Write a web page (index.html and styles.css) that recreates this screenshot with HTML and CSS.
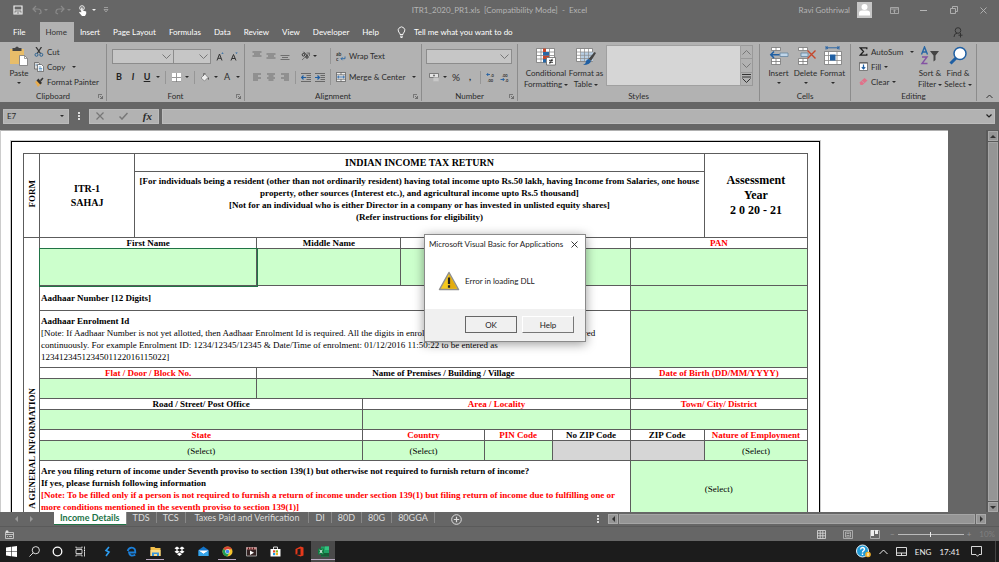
FILE: index.html
```html
<!DOCTYPE html>
<html lang="en">
<head>
    <meta charset="utf-8">
    <title>ITR1_2020_PR1.xls [Compatibility Mode] - Excel</title>
    <meta name="viewport" content="width=device-width, initial-scale=1.0">
    <link rel="stylesheet" href="styles.css">
</head>
<body>

<!-- Title bar -->
<header class="titlebar">
    <div class="quick">
        <button aria-label="Save"><svg width="10" height="10" viewBox="0 0 10 10"><path d="M1 1h8v8H1z" fill="none" stroke="#f0f0f0" stroke-width="1.2"/><path d="M1 5h8M3 9V7h4v2" fill="none" stroke="#f0f0f0" stroke-width="1.2"/></svg></button>
        <button class="dim" aria-label="Undo"><svg width="10" height="10" viewBox="0 0 10 10"><path d="M4 1L1 4l3 3M1 4h5q3 0 3 3v1l-2 1" fill="none" stroke="currentColor" stroke-width="1.2"/></svg><i class="caret"></i></button>
        <button class="dim" aria-label="Redo"><svg width="10" height="10" viewBox="0 0 10 10"><path d="M6 1l3 3-3 3M9 4H4Q1 4 1 7v1l2 1" fill="none" stroke="currentColor" stroke-width="1.2"/></svg><i class="caret"></i></button>
        <button aria-label="Touch mode"><svg width="10" height="11" viewBox="0 0 10 11"><circle cx="4" cy="3" r="2.3" fill="none" stroke="#eee"/><path d="M3.2 2.5h1.4v3l3.6 1v2.2L7 11H4L1 7.5l1-.7 1.2.8z" fill="#fff"/></svg><i class="caret"></i></button>
        <button aria-label="Customize toolbar"><svg width="6" height="6" viewBox="0 0 6 6"><path d="M1 .5h4M1 2.500h4L3 5z" fill="none" stroke="#aaa" stroke-width=".8"/></svg></button>
    </div>
    <div class="doc-title">ITR1_2020_PR1.xls&nbsp; [Compatibility Mode]&nbsp; -&nbsp; Excel</div>
    <div class="win-controls">
        <span>Ravi Gothriwal</span>
        <svg class="avatar" width="15" height="16" viewBox="0 0 15 16"><path d="M0 0h15v16H0z" fill="#c6c6c6"/><circle cx="7.500" cy="5" r="3" fill="#fff"/><path d="M2 13.500V11q0-2.500 3-2.500h5q3 0 3 2.500v2.500z" fill="#fff"/></svg>
        <button aria-label="Ribbon options"><svg width="9" height="7" viewBox="0 0 9 7"><path d="M.5.5h8v6h-8zM.5 2h8M4.500 6V3.200M3.200 4.300l1.300-1.300 1.300 1.300" fill="none" stroke="currentColor" stroke-width=".8"/></svg></button>
        <button aria-label="Minimize"><svg width="7" height="7" viewBox="0 0 7 7"><path d="M0 3.500h7" stroke="currentColor"/></svg></button>
        <button aria-label="Restore"><svg width="8" height="8" viewBox="0 0 8 8"><path d="M.5 2.500h5v5h-5zM2.500 2V.5h5v5H6" fill="none" stroke="currentColor" stroke-width=".9"/></svg></button>
        <button aria-label="Close"><svg width="7" height="7" viewBox="0 0 7 7"><path d="M.5.5l6 6M6.500.5l-6 6" stroke="currentColor" stroke-width=".9"/></svg></button>
    </div>
</header>

<!-- Ribbon tabs -->
<nav class="tabs">
    <a class="file" href="#">File</a>
    <a class="active" href="#">Home</a>
    <a href="#">Insert</a>
    <a href="#">Page Layout</a>
    <a href="#">Formulas</a>
    <a href="#">Data</a>
    <a href="#">Review</a>
    <a href="#">View</a>
    <a href="#">Developer</a>
    <a href="#">Help</a>
    <button class="tell-me"><svg width="9" height="12" viewBox="0 0 9 12"><path d="M3 8.500Q3 7 1.700 6A3.300 3.300 0 1 1 7.300 6Q6 7 6 8.500zM3 10.200h3M3.500 11.500h2" fill="none" stroke="#fff" stroke-width=".9"/></svg>Tell me what you want to do</button>
    <button class="share" aria-label="Share"><svg width="10" height="11" viewBox="0 0 10 11"><circle cx="5" cy="3.500" r="2.800" fill="none" stroke="#333"/><path d="M1 10q0-3.500 3-3.800M7.500 6v4.500M5.500 8.200h4" fill="none" stroke="#333"/></svg></button>
</nav>

<!-- Ribbon -->
<section class="ribbon">
    <div class="group clipboard">
        <div class="group-body">
            <button class="big"><svg width="20" height="20" viewBox="0 0 20 20"><path d="M1 3h14v15H1z" fill="#e8bd69"/><path d="M3.500 2H6q2-3 4 0h2.500v3h-9z" fill="#444"/><path d="M10.500 9.500h5l3 3v7h-8z" fill="#fff" stroke="#777" stroke-width=".8"/><path d="M15.500 9.500v3h3" fill="none" stroke="#777" stroke-width=".7"/></svg>Paste<i class="caret"></i></button>
            <div class="stack">
                <button><svg width="10" height="10" viewBox="0 0 10 10"><path d="M2 0l4.500 6.500M7.500 0L3.200 6.500" stroke="#333" stroke-width="1.300"/><circle cx="2.500" cy="7.800" r="1.500" fill="none" stroke="#2e6391"/><circle cx="7.300" cy="7.800" r="1.500" fill="none" stroke="#2e6391"/></svg>Cut</button>
                <button><svg width="10" height="10" viewBox="0 0 10 10"><path d="M.5.5h4l1 1v5.500h-5z" fill="#ddd" stroke="#555" stroke-width=".7"/><path d="M3.500 2.500h4l2 2v5h-6z" fill="#fff" stroke="#555" stroke-width=".7"/><path d="M4.800 5h2.500M4.800 6.500h3.400M4.800 8h3.400M1.500 3h2" stroke="#2e72ad" stroke-width=".7"/></svg>Copy<i class="caret wide"></i></button>
                <button><svg width="10" height="10" viewBox="0 0 10 10"><path d="M1 5l3-2 3 4-3 3z" fill="#e8ad50"/><path d="M2.500 3.500l2-2 3.500 4.500-1.800 1.500zM6 3l2.500-2.500 1 1L7 4.500z" fill="#333"/></svg>Format Painter</button>
            </div>
        </div>
        <div class="group-label">Clipboard<svg width="5" height="5" viewBox="0 0 5 5"><path d="M.4 4V.4H4M2 2l2.500 2.500V2M4.500 4.500H2" fill="none" stroke="#555" stroke-width=".7"/></svg></div>
    </div>

    <div class="group font">
        <div class="group-body rows">
            <div class="row">
                <select class="combo font-name" aria-label="Font"><option></option></select>
                <select class="combo font-size" aria-label="Font size"><option></option></select>
                <button class="tool grow" aria-label="Increase font size"><svg width="9" height="9" viewBox="0 0 9 9"><path d="M1 8.500L3.500 2 6 8.500M2 6.300h3" fill="none" stroke="#333"/><path d="M5.300 1.800L6.500.3l1.200 1.500z" fill="#2767a5"/></svg></button>
                <button class="tool" aria-label="Decrease font size"><svg width="9" height="9" viewBox="0 0 9 9"><path d="M1 8.500L3.500 2.500 6 8.500M2 6.500h3" fill="none" stroke="#333"/><path d="M5.300.5h2.400L6.500 2z" fill="#2767a5"/></svg></button>
            </div>
            <div class="row">
                <button class="tool bold">B</button>
                <button class="tool bold italic">I</button>
                <button class="tool bold under">U</button>
                <i class="caret"></i>
                <span class="sep"></span>
                <button class="tool" aria-label="Borders"><svg width="9" height="9" viewBox="0 0 9 9"><path d="M0 0h9v9H0z" fill="#fff"/><path d="M4.500 0v9M0 4.500h9" stroke="#999"/><path d="M0 8.600h9" stroke="#777" stroke-width=".8"/></svg></button>
                <i class="caret"></i>
                <span class="sep"></span>
                <button class="tool" aria-label="Fill color"><svg width="10" height="9" viewBox="0 0 10 9"><path d="M1 5l4-4 3 3.500L4.500 8z" fill="#eee" stroke="#777" stroke-width=".7"/><path d="M3.500 3V.5h2" fill="none" stroke="#666" stroke-width=".8"/><path d="M8 4q1.500 2 .5 3-1-.5-.5-3z" fill="#444"/></svg></button>
                <i class="caret"></i>
                <button class="tool">A</button>
                <i class="caret"></i>
            </div>
        </div>
        <div class="group-label">Font<svg width="5" height="5" viewBox="0 0 5 5"><path d="M.4 4V.4H4M2 2l2.500 2.500V2M4.500 4.500H2" fill="none" stroke="#555" stroke-width=".7"/></svg></div>
    </div>

    <div class="group align">
        <div class="group-body rows">
            <div class="row">
                <button class="tool" aria-label="Top align"><svg width="10" height="10" viewBox="0 0 10 10"><path d="M.5 1h9M2 3h6M.5 5h9" stroke="#666" stroke-width=".9"/></svg></button>
                <button class="tool" aria-label="Middle align"><svg width="10" height="10" viewBox="0 0 10 10"><path d="M.5 3h9M2 5h6M.5 7h9" stroke="#666" stroke-width=".9"/></svg></button>
                <button class="tool" aria-label="Bottom align"><svg width="10" height="10" viewBox="0 0 10 10"><path d="M.5 4.500h9M2 6.500h6M.5 8.500h9" stroke="#666" stroke-width=".9"/></svg></button>
                <span class="sep hidden"></span>
                <button class="tool" aria-label="Orientation"><svg width="10" height="10" viewBox="0 0 10 10"><path d="M1 9l7.500-7M8.500 5V2H5.500" fill="none" stroke="#666" stroke-width=".9"/><circle cx="2.500" cy="3.800" r="1.300" fill="none" stroke="#333"/><path d="M2.500.8L6.500 5" stroke="#333"/><circle cx="6" cy="6" r="1.200" fill="none" stroke="#333"/></svg></button>
                <i class="caret"></i>
                <span class="sep tall"></span>
                <button class="wide-tool"><svg width="10" height="10" viewBox="0 0 10 10"><text x="0" y="5" class="icon-text">ab</text><text x="0" y="10" class="icon-text">c</text><path d="M9 5.500v2.200H5M6.500 6.200L5 7.700l1.500 1.500" fill="none" stroke="#2767a5" stroke-width=".9"/></svg>Wrap Text</button>
            </div>
            <div class="row">
                <button class="tool" aria-label="Align left"><svg width="8" height="8" viewBox="0 0 8 8"><path d="M0 1h8M0 3h5M0 5h8M0 7h5" stroke="#666" stroke-width=".9"/></svg></button>
                <button class="tool" aria-label="Center"><svg width="8" height="8" viewBox="0 0 8 8"><path d="M0 1h8M1.500 3h5M0 5h8M1.500 7h5" stroke="#666" stroke-width=".9"/></svg></button>
                <button class="tool" aria-label="Align right"><svg width="8" height="8" viewBox="0 0 8 8"><path d="M0 1h8M3 3h5M0 5h8M3 7h5" stroke="#666" stroke-width=".9"/></svg></button>
                <span class="sep"></span>
                <button class="tool" aria-label="Decrease indent"><svg width="10" height="9" viewBox="0 0 10 9"><path d="M0 .5h10M5.500 2.500H10M5.500 4.500H10M5.500 6.500H10M0 8.500h10" stroke="#555" stroke-width=".8"/><path d="M5 4.500H.8M2.500 2.500l-2 2 2 2" fill="none" stroke="#1f5fa3" stroke-width="1.200"/></svg></button>
                <button class="tool" aria-label="Increase indent"><svg width="10" height="9" viewBox="0 0 10 9"><path d="M0 .5h10M5.500 2.500H10M5.500 4.500H10M5.500 6.500H10M0 8.500h10" stroke="#555" stroke-width=".8"/><path d="M0 4.500h4.200M2.500 2.500l2 2-2 2" fill="none" stroke="#1f5fa3" stroke-width="1.200"/></svg></button>
                <span class="sep gap"></span>
                <button class="wide-tool"><svg width="10" height="10" viewBox="0 0 10 10"><path d="M.4.400h9.200v9.200H.4z" fill="#eee" stroke="#555" stroke-width=".8"/><path d="M.5 2.800h9M.5 7.200h9M5 .5v2.300M5 7.200v2.300" stroke="#555" stroke-width=".7"/><path d="M1.500 5h7M3 3.700L1.600 5 3 6.300M7 3.700L8.400 5 7 6.300" fill="none" stroke="#1f5fa3" stroke-width=".9"/></svg>Merge &amp; Center<i class="caret wide"></i></button>
            </div>
        </div>
        <div class="group-label">Alignment<svg width="5" height="5" viewBox="0 0 5 5"><path d="M.4 4V.4H4M2 2l2.500 2.500V2M4.500 4.500H2" fill="none" stroke="#555" stroke-width=".7"/></svg></div>
    </div>

    <div class="group number">
        <div class="group-body rows">
            <div class="row">
                <select class="combo format" aria-label="Number format"><option></option></select>
            </div>
            <div class="row">
                <button class="tool" aria-label="Accounting format"><svg width="11" height="9" viewBox="0 0 11 9"><path d="M.5.500h9v4h-9z" fill="#e4e4e4" stroke="#666" stroke-width=".8"/><circle cx="5" cy="2.500" r="1.100" fill="#777"/><path d="M4.500 4.500h5v4h-5z" fill="#ddd"/><path d="M4.500 6h5M4.500 8h5" stroke="#999" stroke-width=".6"/></svg></button>
                <i class="caret"></i>
                <button class="tool percent">%</button>
                <button class="tool bold comma">,</button>
                <span class="sep"></span>
                <button class="tool" aria-label="Increase decimal"><svg width="10" height="10" viewBox="0 0 10 10"><text x="4.500" y="4.500" class="icon-num">.0</text><text x="1.500" y="9.500" class="icon-num">.00</text><path d="M4 2.500H.8M2.200 1L.8 2.500 2.200 4" fill="none" stroke="#1f5fa3" stroke-width=".9"/></svg></button>
                <button class="tool" aria-label="Decrease decimal"><svg width="10" height="10" viewBox="0 0 10 10"><text x="2" y="4.500" class="icon-num">.00</text><text x="5" y="9.500" class="icon-num">.0</text><path d="M.5 7.500h3.700M2.800 6l1.400 1.500L2.800 9" fill="none" stroke="#1f5fa3" stroke-width=".9"/></svg></button>
            </div>
        </div>
        <div class="group-label">Number<svg width="5" height="5" viewBox="0 0 5 5"><path d="M.4 4V.4H4M2 2l2.500 2.500V2M4.500 4.500H2" fill="none" stroke="#555" stroke-width=".7"/></svg></div>
    </div>

    <div class="group styles">
        <div class="group-body">
            <button class="big"><svg width="20" height="20" viewBox="0 0 20 20"><path d="M.5 2.500h18v14H.5z" fill="#fff" stroke="#777" stroke-width=".8"/><path d="M.5 6h18M.5 9.500h18M.5 13h18M5 2.500v14M13.500 2.500v14" stroke="#888" stroke-width=".8"/><path d="M7 2.500h3v3.500H7zM7 9.500h6V13H7z" fill="#c5472c"/><path d="M7 6h6v3.500H7zM7 13h3v3.500H7z" fill="#2767a5"/><path d="M10.500 11.500h9v7.500h-9z" fill="#fff" stroke="#666" stroke-width=".8"/><path d="M13 14.300h4M13 16.300h4M16.300 12.800l-2.600 5" stroke="#222" stroke-width=".9"/></svg><span>Conditional<br>Formatting <i class="caret"></i></span></button>
            <button class="big"><svg width="20" height="20" viewBox="0 0 20 20"><path d="M.5 2.500h16v13H.5z" fill="#fff" stroke="#777" stroke-width=".8"/><path d="M5 6h12v9H5z" fill="#b9cfe4"/><path d="M.5 6h16M.5 9.300h16M.5 12.500h16M4.500 2.500v13M8.500 2.500v13M12.500 2.500v13" stroke="#888" stroke-width=".7"/><path d="M18.500 6l1.500 1-5 8-2.500-2z" fill="#444"/><path d="M12.500 13l2.500 2q-1 4-8 4 3-1.500 3-3.500t2.500-2.500z" fill="#1f5fa3"/></svg><span>Format as<br>Table <i class="caret"></i></span></button>
            <div class="gallery"></div>
            <div class="gallery-scroll">
                <button aria-label="Previous styles"><svg width="9" height="5" viewBox="0 0 9 5"><path d="M.5 4.500l4-4 4 4" fill="none" stroke="#777"/></svg></button>
                <button aria-label="Next styles"><svg width="9" height="5" viewBox="0 0 9 5"><path d="M.5.500l4 4 4-4" fill="none" stroke="#777"/></svg></button>
                <button aria-label="More styles"><svg width="9" height="9" viewBox="0 0 9 9"><path d="M0 .5h9M0 3h9M.5 4.500l4 4 4-4" fill="none" stroke="#333"/></svg></button>
            </div>
        </div>
        <div class="group-label">Styles</div>
    </div>

    <div class="group cells">
        <div class="group-body">
            <button class="big"><svg width="20" height="20" viewBox="0 0 20 20"><path d="M2.500 1.500h9v3h-9zM2.500 12.500h9v6h-9z" fill="#fff" stroke="#777" stroke-width=".8"/><path d="M7 1.500v3M7 12.500v6M2.500 15.500h9" stroke="#777" stroke-width=".8"/><path d="M11 7h8v3.500h-8z" fill="#c0d6ea" stroke="#6685a0" stroke-width=".8"/><path d="M10.500 8.700H2M5 5.500L1.800 8.700 5 12" fill="none" stroke="#1f5fa3" stroke-width="1.500"/></svg>Insert<i class="caret"></i></button>
            <button class="big"><svg width="20" height="20" viewBox="0 0 20 20"><path d="M2.500 1.500h9v3h-9zM2.500 12.500h9v6h-9z" fill="#fff" stroke="#777" stroke-width=".8"/><path d="M7 1.500v3M7 12.500v6M2.500 15.500h9" stroke="#777" stroke-width=".8"/><path d="M5 7h7v3.500H5z" fill="#c0d6ea" stroke="#6685a0" stroke-width=".8"/><path d="M11.500 4.500l8 8M19.500 4.500l-8 8" stroke="#c5472c" stroke-width="1.400"/></svg>Delete<i class="caret"></i></button>
            <button class="big"><svg width="20" height="20" viewBox="0 0 20 20"><path d="M1.500 5.500h17v13h-17z" fill="#fff" stroke="#777" stroke-width=".8"/><path d="M5.500 5.500v13M14 5.500v13M1.500 9.500h17M1.500 14.500h17" stroke="#888" stroke-width=".8"/><path d="M7 8.500h5.500v6H7z" fill="#1f5fa3"/><path d="M3 1.800h13M3 0v3.600M16 0v3.600M5 .5L3.500 1.800 5 3M14 .5l1.500 1.300L14 3" fill="none" stroke="#1f5fa3" stroke-width=".9"/></svg>Format<i class="caret"></i></button>
        </div>
        <div class="group-label">Cells</div>
    </div>

    <div class="group editing">
        <div class="group-body">
            <div class="stack">
                <button><svg width="9" height="9" viewBox="0 0 9 9"><path d="M7.800 2.200V.8H1.200l3.300 3.700-3.300 3.700h6.600V6.800" fill="none" stroke="#222" stroke-width="1.300"/></svg>AutoSum<i class="caret wide"></i></button>
                <button><svg width="9" height="9" viewBox="0 0 9 9"><path d="M.5.500h8v8h-8z" fill="#fff" stroke="#666" stroke-width=".8"/><path d="M.5 1h8" stroke="#555"/><path d="M4.500 2.500v4.500M2.800 5.200l1.700 1.800 1.700-1.800" fill="none" stroke="#1f5fa3" stroke-width="1.200"/></svg>Fill<i class="caret"></i></button>
                <button><svg width="9" height="9" viewBox="0 0 9 9"><path d="M.5 5.500L5.500 1l3 2.500-5 4.500h-2z" fill="#e0728a"/><path d="M2.500 3.800l3 2.500" stroke="#b2b2b2" stroke-width=".7"/></svg>Clear<i class="caret"></i></button>
            </div>
            <button class="big"><svg width="20" height="20" viewBox="0 0 20 20"><path d="M1.500 8.500L4.500 1l3 7.500M2.500 6h4" fill="none" stroke="#2767a5" stroke-width="1.400"/><path d="M2 11h5l-5 6.500h5.500" fill="none" stroke="#8452a3" stroke-width="1.400"/><path d="M10 5h9l-3.500 4.500V14l-2 1.500v-6z" fill="#444"/></svg><span>Sort &amp;<br>Filter <i class="caret"></i></span></button>
            <button class="big"><svg width="20" height="20" viewBox="0 0 20 20"><path d="M8 12l-5.500 5.500" stroke="#1f5fa3" stroke-width="3"/><circle cx="12" cy="7.500" r="6" fill="#fff" stroke="#1f5fa3" stroke-width="1.500"/></svg><span>Find &amp;<br>Select <i class="caret"></i></span></button>
        </div>
        <div class="group-label">Editing</div>
    </div>
    <button class="collapse" aria-label="Collapse ribbon"><svg width="7" height="5" viewBox="0 0 7 5"><path d="M.5 4l3-3 3 3" fill="none" stroke="#333"/></svg></button>
</section>

<!-- Formula bar -->
<section class="formula-bar">
    <div class="name-box"><input type="text" value="E7" aria-label="Name box"><i class="caret"></i></div>
    <span class="dots"></span>
    <div class="fx-box">
        <button aria-label="Cancel"><svg width="8" height="8" viewBox="0 0 8 8"><path d="M.5.500l7 7M7.500.5l-7 7" stroke="#777" stroke-width="1.200"/></svg></button>
        <button aria-label="Enter"><svg width="9" height="8" viewBox="0 0 9 8"><path d="M.5 4.500l2.500 2.500L8.500 1" fill="none" stroke="#777" stroke-width="1.500"/></svg></button>
        <button class="fx">fx</button>
    </div>
    <div class="formula"><input type="text" aria-label="Formula"><svg width="6" height="4" viewBox="0 0 6 4"><path d="M.5.500L3 3 5.500.5" fill="none" stroke="#222" stroke-width="1.200"/></svg></div>
</section>

<!-- Worksheet -->
<main class="workspace">
    <div class="sheet">
        <div class="form">
            <table>
                <colgroup>
                    <col class="c1"><col class="c2"><col class="c3"><col class="c4"><col class="c5">
                    <col class="c6"><col class="c7"><col class="c8"><col class="c9"><col class="c10">
                </colgroup>
                <tr class="r-title">
                    <th rowspan="2"><span class="side">FORM</span></th>
                    <th rowspan="2" class="big-text">ITR-1<br>SAHAJ</th>
                    <th colspan="7" class="title">INDIAN INCOME TAX RETURN</th>
                    <th rowspan="2" class="year">Assessment<br>Year<br>2 0 20 - 21</th>
                </tr>
                <tr class="r-intro">
                    <th colspan="7" class="intro">[For individuals being a resident (other than not ordinarily resident) having total income upto Rs.50 lakh, having Income from Salaries, one house<br>property, other sources (Interest etc.), and agricultural income upto Rs.5 thousand]<br>[Not for an individual who is either Director in a company or has invested in unlisted equity shares]<br>(Refer instructions for eligibility)</th>
                </tr>
                <tr class="r-head">
                    <th rowspan="11" class="side-cell"><span class="side">A GENERAL INFORMATION</span></th>
                    <th colspan="2"><label for="first">First Name</label></th>
                    <th colspan="2"><label for="middle">Middle Name</label></th>
                    <th colspan="3"></th>
                    <th colspan="2"><label for="pan" class="req">PAN</label></th>
                </tr>
                <tr class="r-name">
                    <td colspan="2" class="fill selected"><input type="text" id="first"></td>
                    <td colspan="2" class="fill"><input type="text" id="middle"></td>
                    <td colspan="3" class="fill"><input type="text" aria-label="Last Name"></td>
                    <td colspan="2" class="fill"><input type="text" id="pan"></td>
                </tr>
                <tr class="r-aadhaar">
                    <td colspan="7" class="note"><b><label for="aadhaar">Aadhaar Number [12 Digits]</label></b></td>
                    <td colspan="2" class="fill"><input type="text" id="aadhaar"></td>
                </tr>
                <tr class="r-enrol">
                    <td colspan="7" class="note"><b><label for="enrol">Aadhaar Enrolment Id</label></b><br>[Note: If Aadhaar Number is not yet allotted, then Aadhaar Enrolment Id is required. All the digits in enrolment and Date/Time of enrolment to be entered<br>continuously. For example Enrolment ID: 1234/12345/12345 &amp; Date/Time of enrolment: 01/12/2016 11:50:22 to be entered as<br>1234123451234501122016115022]</td>
                    <td colspan="2" class="fill"><input type="text" id="enrol"></td>
                </tr>
                <tr class="r-head">
                    <th colspan="2"><label for="flat" class="req">Flat / Door / Block No.</label></th>
                    <th colspan="5"><label for="premises">Name of Premises / Building / Village</label></th>
                    <th colspan="2"><label for="dob" class="req">Date of Birth (DD/MM/YYYY)</label></th>
                </tr>
                <tr class="r-field">
                    <td colspan="2" class="fill"><input type="text" id="flat"></td>
                    <td colspan="5" class="fill"><input type="text" id="premises"></td>
                    <td colspan="2" class="fill"><input type="text" id="dob"></td>
                </tr>
                <tr class="r-head">
                    <th colspan="3"><label for="road">Road / Street/ Post Office</label></th>
                    <th colspan="4"><label for="area" class="req">Area / Locality</label></th>
                    <th colspan="2"><label for="town" class="req">Town/ City/ District</label></th>
                </tr>
                <tr class="r-field">
                    <td colspan="3" class="fill"><input type="text" id="road"></td>
                    <td colspan="4" class="fill"><input type="text" id="area"></td>
                    <td colspan="2" class="fill"><input type="text" id="town"></td>
                </tr>
                <tr class="r-head">
                    <th colspan="3"><label for="state" class="req">State</label></th>
                    <th colspan="2"><label for="country" class="req">Country</label></th>
                    <th><label for="pin" class="req">PIN Code</label></th>
                    <th><label for="nozip">No ZIP Code</label></th>
                    <th><label for="zip">ZIP Code</label></th>
                    <th><label for="nature" class="req">Nature of Employment</label></th>
                </tr>
                <tr class="r-field">
                    <td colspan="3" class="fill"><select id="state"><option>(Select)</option></select></td>
                    <td colspan="2" class="fill"><select id="country"><option>(Select)</option></select></td>
                    <td class="fill"><input type="text" id="pin"></td>
                    <td class="off"><input type="text" id="nozip"></td>
                    <td class="off"><input type="text" id="zip"></td>
                    <td class="fill"><select id="nature"><option>(Select)</option></select></td>
                </tr>
                <tr class="r-filing">
                    <td colspan="7" class="note"><b>Are you filing return of income under Seventh proviso to section 139(1) but otherwise not required to furnish return of income?<br>If yes, please furnish following information<br><span class="req">[Note: To be filled only if a person is not required to furnish a return of income under section 139(1) but filing return of income due to fulfilling one or<br>more conditions mentioned in the seventh proviso to section 139(1)]</span></b></td>
                    <td colspan="2" class="fill"><select aria-label="Filing under Seventh proviso"><option>(Select)</option></select></td>
                </tr>
            </table>
        </div>
    </div>
    <div class="gutter"></div>
    <div class="vscroll">
        <button aria-label="Scroll up"><i class="tri up"></i></button>
        <div class="thumb"></div>
        <button aria-label="Scroll down"><i class="tri down"></i></button>
    </div>
</main>

<!-- Sheet tabs -->
<nav class="sheet-tabs">
    <div class="sheet-nav">
        <button aria-label="Previous sheet"><i class="tri left"></i></button>
        <button aria-label="Next sheet"><i class="tri right"></i></button>
    </div>
    <a class="active" href="#">Income Details</a>
    <a href="#">TDS</a>
    <a href="#">TCS</a>
    <a class="long" href="#">Taxes Paid and Verification</a>
    <a href="#">DI</a>
    <a href="#">80D</a>
    <a href="#">80G</a>
    <a href="#">80GGA</a>
    <button class="add" aria-label="New sheet"><svg width="11" height="11" viewBox="0 0 11 11"><circle cx="5.500" cy="5.500" r="4.800" fill="none" stroke="#ddd"/><path d="M5.500 2.800v5.400M2.800 5.500h5.400" stroke="#ddd" stroke-width="1.200"/></svg></button>
    <span class="dots"></span>
    <div class="hscroll">
        <button aria-label="Scroll left"><i class="tri left"></i></button>
        <div class="thumb"></div>
        <button aria-label="Scroll right"><i class="tri right"></i></button>
    </div>
</nav>

<!-- Status bar -->
<footer class="status">
    <svg width="9" height="9" viewBox="0 0 9 9"><path d="M.5 2.500h8v6h-8zM.5 4.500h8M2 6.500h1M4 6.500h3" fill="none" stroke="#ccc" stroke-width=".9"/><circle cx="2" cy="1.800" r="1.500" fill="#ddd"/></svg>
    <div class="views">
        <button aria-label="Normal"><svg width="9" height="9" viewBox="0 0 9 9"><path d="M.5.500h8v8h-8zM.5 3.200h8M.5 5.800h8M3.200.5v8M5.800.5v8" fill="none" stroke="#ddd" stroke-width=".8"/></svg></button>
        <button aria-label="Page layout"><svg width="10" height="9" viewBox="0 0 10 9"><path d="M.5.500h9v8h-9zM2.500 2h5v5h-5zM3.500 3.500h3M3.500 5.500h3" fill="none" stroke="#bbb" stroke-width=".8"/></svg></button>
        <button aria-label="Page break preview"><svg width="10" height="9" viewBox="0 0 10 9"><path d="M.5.500h9v8h-9z" fill="none" stroke="#bbb" stroke-width=".8"/><path d="M1 0h3v6H1zM5 0h3v4H5z" fill="#eee"/></svg></button>
    </div>
    <div class="zoom">
        <button aria-label="Zoom out">−</button>
        <input type="range" min="0" max="100" value="50" aria-label="Zoom">
        <button aria-label="Zoom in">+</button>
        <span>10%</span>
    </div>
</footer>

<!-- Windows taskbar -->
<footer class="taskbar">
    <div class="system">
        <button aria-label="Start"><svg width="11" height="11" viewBox="0 0 11 11"><path d="M0 1.500L5 .8v4.400H0zM5.600.7L11 0v5.200H5.600zM0 5.800h5v4.400l-5-.7zM5.600 5.800H11V11l-5.400-.7z" fill="#fff"/></svg></button>
        <button aria-label="Search"><svg width="11" height="11" viewBox="0 0 11 11"><circle cx="6.800" cy="4.200" r="3.600" fill="none" stroke="#ddd"/><path d="M4.200 6.800L.5 10.500" stroke="#ddd"/></svg></button>
        <button aria-label="Cortana"><svg width="11" height="11" viewBox="0 0 11 11"><circle cx="5.500" cy="5.500" r="4.300" fill="none" stroke="#fff" stroke-width="1.300"/></svg></button>
        <button aria-label="Task view"><svg width="11" height="11" viewBox="0 0 11 11"><path d="M1 .5v1.500h6V.5M1 10.500V9h6v1.500M1 3.500h6v4H1zM9.500.5v2.500M9.500 6v4.500" fill="none" stroke="#ddd" stroke-width=".9"/><path d="M9 3.500h1v2H9z" fill="#fff"/></svg></button>
    </div>
    <div class="apps">
        <button aria-label="Shareit"><svg width="11" height="11" viewBox="0 0 11 11"><path d="M7 1L4 4.500 7 6 4 10" fill="none" stroke="#2d9df0" stroke-width="1.600"/></svg></button>
        <button aria-label="Edge"><svg width="11" height="11" viewBox="0 0 11 11"><path d="M9.300 8.800Q3.500 11 3 6.500h6.300Q9.500 1.700 5.700 1.700 2.700 1.700 1.600 5" fill="none" stroke="#1b7fd8" stroke-width="1.800"/></svg></button>
        <button class="open" aria-label="File Explorer"><svg width="11" height="11" viewBox="0 0 11 11"><path d="M.5 1h4l1 1h5v8H.5z" fill="#f3c04b"/><path d="M.5 4h10v6H.5z" fill="#fbdc86"/><path d="M2 6.500h7V10H7V8H4v2H2z" fill="#3b98dc"/></svg></button>
        <button aria-label="Dropbox"><svg width="11" height="11" viewBox="0 0 11 11"><path d="M3 .5l2.500 1.800L3 4 .5 2.300zM8 .5l2.500 1.800L8 4 5.500 2.300zM3 4l2.500 1.800L3 7.500.5 5.800zM8 4l2.500 1.800L8 7.500 5.500 5.800zM5.500 6.500L8 8.300 5.500 10 3 8.300z" fill="#fff"/></svg></button>
        <button aria-label="Mail"><svg width="11" height="11" viewBox="0 0 11 11"><path d="M.5 4l5-3.500 5 3.500v6H.5z" fill="#1374c9"/><path d="M.5 4.500h10L5.500 8z" fill="#fff"/><path d="M.5 4.500l5 3.500 5-3.500V10H.5z" fill="#35a5ea"/></svg></button>
        <button class="open" aria-label="Chrome"><svg width="11" height="11" viewBox="0 0 11 11"><circle cx="5.500" cy="5.500" r="5" fill="#f5c32c"/><path d="M5.500 5.500L1.200 3A5 5 0 0 1 10 3.200H5.500z" fill="#db4437"/><path d="M1.200 3A5 5 0 0 0 5.200 10.500L7.500 6.600 5.500 5.500z" fill="#209d58"/><circle cx="5.500" cy="5.500" r="2.300" fill="#fff"/><circle cx="5.500" cy="5.500" r="1.800" fill="#4285f4"/></svg></button>
        <button aria-label="Video editor"><svg width="11" height="11" viewBox="0 0 11 11"><path d="M.5 1.500h10v8.500H.5z" fill="#322" stroke="#ccc" stroke-width=".7"/><path d="M.5 1.500h10v2H.5z" fill="#c88"/><path d="M2.500 1.500v2M5 1.500v2M7.500 1.500v2" stroke="#511"/><path d="M4 4.500l4 2.300L4 9z" fill="#fff"/></svg></button>
        <button aria-label="Store"><svg width="11" height="11" viewBox="0 0 11 11"><path d="M3.500 3V1h4v2" fill="none" stroke="#eee" stroke-width=".9"/><path d="M.5 3h10v7.500H.5z" fill="#fff"/><path d="M3 4.300h2.200v2.200H3z" fill="#e0472c"/><path d="M5.800 4.300H8v2.200H5.800z" fill="#7cb518"/><path d="M3 7h2.200v2.200H3z" fill="#1d9de5"/><path d="M5.800 7H8v2.200H5.800z" fill="#f6b61b"/></svg></button>
        <button aria-label="Office"><svg width="11" height="11" viewBox="0 0 11 11"><path d="M1.500 3L6.500.5 9.500 1.500v8L6.500 10.500 1.500 8.500l5 .5V2.500L3.500 3.300v4.200l-2 1z" fill="#e5391b"/></svg></button>
        <button class="open current" aria-label="Excel"><svg width="11" height="11" viewBox="0 0 11 11"><path d="M3 .5h8v10H3z" fill="#21a366"/><path d="M7 .5h4v3.500H7z" fill="#33c481"/><path d="M7 7h4v3.500H3V7z" fill="#185c37"/><path d="M0 2.500h6v6H0z" fill="#107c41"/><path d="M1.700 3.800l2.600 3.400M4.300 3.800L1.700 7.200" stroke="#fff" stroke-width=".9"/></svg></button>
    </div>
    <div class="tray">
        <svg width="15" height="15" viewBox="0 0 15 15"><circle cx="6.500" cy="7" r="6" fill="#1f9ad6" stroke="#e8f4fb"/><path d="M4.500 5.500Q4.800 3.500 6.500 3.500t2 1.500q0 1-1 1.700T6.500 8.500M6.500 9.500v1.500" fill="none" stroke="#fff" stroke-width="1.400"/><circle cx="12" cy="10.500" r="2.800" fill="#f0b02c"/><path d="M12 9v3" stroke="#fff"/></svg>
        <svg width="9" height="6" viewBox="0 0 9 6"><path d="M.5 5l4-4 4 4" fill="none" stroke="#eee"/></svg>
        <svg width="11" height="9" viewBox="0 0 11 9"><path d="M.5.500h10v8H.5zM.5 6h10M5.500 6v2.500" fill="none" stroke="#eee" stroke-width=".9"/></svg>
        <span>ENG</span>
        <span>17:41</span>
        <svg class="notify" width="11" height="11" viewBox="0 0 11 11"><path d="M.5.500h10v8H8L6.500 10.300 5 8.500H.5z" fill="none" stroke="#eee" stroke-width=".9"/></svg>
    </div>
</footer>

<!-- VBA error message -->
<dialog open class="message" aria-labelledby="message-title">
    <div class="message-title">
        <span id="message-title">Microsoft Visual Basic for Applications</span>
        <button aria-label="Close"><svg width="7" height="7" viewBox="0 0 7 7"><path d="M.5.500l6 6M6.500.5l-6 6" stroke="#222" stroke-width=".9"/></svg></button>
    </div>
    <div class="message-body">
        <svg width="22" height="20" viewBox="0 0 22 20"><path d="M11 1.500L20.500 18.500h-19z" fill="#f5c91f" stroke="#8f8f8f" stroke-width="1.500" stroke-linejoin="round"/><path d="M11 3.500L19 17.500H11z" fill="#e3ac10"/><path d="M11 6.500v6.500M11 14.300v2.400" stroke="#222" stroke-width="2.200"/></svg>
        Error in loading DLL
    </div>
    <div class="message-buttons">
        <button class="default">OK</button>
        <button>Help</button>
    </div>
</dialog>

</body>
</html>
```
FILE: styles.css
```css
* {
    box-sizing: border-box;
}
body {
    margin: 0;
    height: 100vh;
    display: flex;
    flex-direction: column;
    overflow: hidden;
    background-color: #666;
    color: #2b2b2b;
    font-family: Lato, "Open Sans", sans-serif;
    font-size: 8px;
    line-height: 10px;
}
button, input, select {
    font: inherit;
    color: inherit;
    background: none;
    border: 0;
    border-radius: 0;
    margin: 0;
    padding: 0;
}
a {
    color: inherit;
    text-decoration: none;
}
svg {
    display: block;
    flex: none;
}
.caret {
    display: inline-block;
    flex: none;
    border: 2px solid transparent;
    border-top-color: currentColor;
    border-bottom: 0;
    vertical-align: middle;
}
.dots {
    flex: none;
    width: 2px;
    height: 8px;
    background: repeating-linear-gradient(#ddd 0 2px, transparent 2px 3px);
}
.tri {
    display: block;
    border: 3px solid transparent;
}
.tri.up { border-bottom-color: #333; border-top: 0; }
.tri.down { border-top-color: #333; border-bottom: 0; }
.tri.left { border-right-color: #333; border-left: 0; }
.tri.right { border-left-color: #333; border-right: 0; }

/* title bar */
.titlebar {
    flex: none;
    display: grid;
    grid-template-columns: 1fr auto 1fr;
    align-items: center;
    height: 22px;
    padding-bottom: 2px;
    color: #b5b5b5;
}
.quick {
    display: flex;
    align-items: center;
    padding-left: 13px;
    gap: 7px;
    color: #eee;
}
.quick button {
    display: flex;
    align-items: center;
    gap: 4px;
}
.quick button:first-child {
    margin-right: 2px;
}
.quick .dim {
    color: #8a8a8a;
    gap: 2px;
}
.win-controls {
    display: flex;
    align-items: center;
    justify-content: flex-end;
    padding-right: 11px;
}
.win-controls button {
    width: 8px;
    margin-left: 22px;
}
.win-controls .avatar {
    margin: 0 -4px 0 7px;
}

/* ribbon tabs */
.tabs {
    flex: none;
    display: flex;
    height: 20px;
    color: #fff;
    line-height: 20px;
    padding-left: 7px;
}
.tabs a {
    padding: 0 7px 0 6px;
}
.tabs .file {
    margin-right: 7px;
}
.tabs .active {
    background-color: #b2b2b2;
    color: #333;
}
.tell-me {
    display: flex;
    align-items: center;
    gap: 8px;
    margin-left: 11px;
}
.share {
    margin: 0 36px 0 auto;
}

/* ribbon */
.ribbon {
    flex: none;
    display: flex;
    height: 60px;
    padding-top: 2px;
    background-color: #b2b2b2;
}
.group {
    flex: none;
    display: flex;
    flex-direction: column;
    height: 57px;
    border-right: 1px solid #8c8c8c;
}
.group-body {
    flex: none;
    display: flex;
    height: 46px;
}
.group-body.rows {
    flex-direction: column;
}
.group-label {
    position: relative;
    text-align: center;
    line-height: 12px;
}
.group-label svg {
    position: absolute;
    right: 3px;
    top: 4px;
}
.clipboard { width: 107px; }
.font { width: 138px; }
.align { width: 177px; }
.number { width: 96px; }
.styles { flex: 1; }
.cells { width: 91px; }
.editing { width: 126px; }

.row {
    display: flex;
    align-items: center;
    height: 18px;
    padding-left: 5px;
}
.row:first-child {
    height: 24px;
}
.big {
    display: flex;
    flex-direction: column;
    align-items: center;
    padding: 2px 0 0;
    line-height: 11px;
    white-space: nowrap;
}
.big svg {
    margin-bottom: 2px;
}
.big > .caret {
    margin-top: 3px;
}
.stack button {
    display: flex;
    align-items: center;
    gap: 3px;
    height: 15px;
    white-space: nowrap;
}
.stack .caret.wide {
    margin-left: 4px;
}
.clipboard .big { width: 34px; padding-left: 4px; }
.styles .big { width: 40px; }
.styles .big:first-child { margin-left: 8px; }
.cells .big { width: 27px; }
.cells .group-body { padding-left: 5px; }
.editing .group-body { padding-left: 8px; }
.editing .stack { width: 57px; }
.editing .big { width: 28px; }

.tool {
    flex: none;
    display: flex;
    align-items: center;
    justify-content: center;
    width: 14px;
    font-size: 9px;
}
.tool.grow { margin-left: 2px; }
.tool.percent { font-size: 10px; }
.bold { font-weight: bold; color: #222; }
.italic { font-style: italic; }
.under { text-decoration: underline; }
.sep {
    flex: none;
    width: 1px;
    height: 13px;
    margin: 0 3px;
    background-color: #969696;
}
.sep.hidden { visibility: hidden; }
.sep.tall, .sep.gap { height: 16px; margin-right: 5px; }
.sep.tall { margin-left: 13px; }
.font .caret, .number .caret { margin: 0 2px; }
.wide-tool {
    display: flex;
    align-items: center;
    gap: 3px;
    white-space: nowrap;
}
.wide-tool .wide { margin-left: 4px; }
.icon-text {
    font: bold 5px Lato, sans-serif;
    fill: #333;
}
.icon-num {
    font: bold 4px Lato, sans-serif;
    fill: #333;
}
.combo {
    appearance: none;
    height: 15px;
    border: 1px solid #8c8c8c;
    background: #c6c6c6 url("data:image/svg+xml,%3Csvg xmlns='http://www.w3.org/2000/svg' width='9' height='5'%3E%3Cpath d='M.5.5l4 4 4-4' fill='none' stroke='%23777'/%3E%3C/svg%3E") no-repeat right 2px center;
}
.font-name { width: 62px; }
.font-size { width: 38px; margin-left: -1px; }
.format { width: 86px; margin-left: -1px; }
.gallery {
    flex: 1;
    height: 41px;
    margin-top: 1px;
    background-color: #d6d6d6;
    border: 1px solid #a0a0a0;
}
.gallery-scroll {
    display: flex;
    flex-direction: column;
    width: 12px;
    height: 41px;
    margin: 1px 6px 0 0;
    border: 1px solid #999;
    border-left: 0;
}
.gallery-scroll button {
    flex: 1;
    display: grid;
    place-items: center;
    border-bottom: 1px solid #999;
}
.gallery-scroll button:last-child {
    border: 0;
}
.collapse {
    align-self: flex-end;
    margin: 0 6px 3px 9px;
}

/* formula bar */
.formula-bar {
    flex: none;
    display: flex;
    align-items: center;
    height: 28px;
    padding: 0 4px 0 3px;
}
.name-box, .fx-box, .formula {
    display: flex;
    align-items: center;
    height: 15px;
    background-color: #b2b2b2;
    border: 1px solid #bcbcbc;
}
.name-box {
    width: 66px;
    padding: 0 4px 0 3px;
}
.name-box input, .formula input {
    flex: 1;
    width: 0;
}
.formula-bar .dots {
    margin: 0 9px;
}
.fx-box {
    width: 70px;
    justify-content: space-between;
    padding: 0 6px;
}
.fx {
    font: italic bold 11px "Liberation Serif", serif;
}
.formula {
    flex: 1;
    margin-left: 3px;
    padding-right: 2px;
}

/* worksheet */
.workspace {
    flex: 1;
    display: flex;
    min-height: 0;
    overflow: hidden;
}
.sheet {
    flex: 1;
    padding: 10px 128px 0 10px;
    background-color: #fff;
    border-top: 1px solid #b0b0b0;
    border-left: 1px solid #ccc;
}
.form {
    height: 400px;
    padding: 11px;
    border: 1px solid #000;
    outline: 1px solid #ccc;
}
.gutter {
    width: 38px;
}
.vscroll {
    display: flex;
    flex-direction: column;
    gap: 1px;
    width: 13px;
    padding: 1px 1px 0 2px;
    background-color: #5a5a5a;
}
.vscroll button, .hscroll button {
    flex: none;
    display: grid;
    place-items: center;
    width: 10px;
    height: 10px;
    background-color: #959595;
    border: 1px solid #aaa;
}
.thumb {
    flex: 1;
    background-color: #959595;
    border: 1px solid #a5a5a5;
}
.vscroll .thumb {
    width: 10px;
}

/* return form */
table {
    width: 100%;
    table-layout: fixed;
    border-collapse: collapse;
    font-family: "Liberation Serif", serif;
    font-size: 9px;
    line-height: 12px;
    color: #000;
}
th, td {
    padding: 0;
    border: 1px solid #5c5c5c;
    white-space: nowrap;
}
.c1 { width: 16px; }
.c2 { width: 95px; }
.c3 { width: 122px; }
.c4 { width: 106px; }
.c5 { width: 38px; }
.c6 { width: 83px; }
.c7 { width: 68px; }
.c8 { width: 78px; }
.c9 { width: 74px; }
.c10 { width: 103px; }

.r-title { height: 18px; }
.r-intro { height: 66px; }
.r-head { height: 11px; line-height: 10px; }
.r-name { height: 37px; }
.r-aadhaar { height: 25px; }
.r-enrol { height: 57px; }
.r-field { height: 20px; }
.r-filing { height: 57px; }

.title, .big-text {
    font-size: 10px;
}
.big-text {
    line-height: 14px;
}
.year {
    font-size: 12px;
    line-height: 15px;
}
.intro {
    vertical-align: top;
    padding-top: 3px;
}
.side {
    writing-mode: vertical-rl;
    transform: rotate(180deg);
}
.side-cell {
    vertical-align: bottom;
    padding-bottom: 6px;
}
.note {
    padding-left: 1px;
}
.req {
    color: #f00;
}
.fill {
    background-color: #cfc;
}
.off {
    background-color: #d6d6d6;
}
.selected {
    outline: 1px solid #217346;
}
td input, td select {
    display: block;
    width: 100%;
    appearance: none;
    text-align: center;
}

/* sheet tabs */
.sheet-tabs {
    flex: none;
    display: flex;
    align-items: center;
    height: 15px;
    color: #ddd;
    font-size: 9px;
    line-height: 11px;
    border-bottom: 1px solid #5a5a5a;
}
.sheet-nav {
    display: flex;
    gap: 12px;
    width: 54px;
    padding-left: 15px;
}
.sheet-nav .left { border-right-color: #999; }
.sheet-nav .right { border-left-color: #999; }
.sheet-tabs a {
    align-self: flex-start;
    padding: 0 6px;
    white-space: nowrap;
    border-right: 1px solid #888;
}
.sheet-tabs .active {
    height: 13px;
    background-color: #fff;
    border-bottom: 1px solid #217346;
    color: #217346;
    font-weight: bold;
}
.sheet-tabs .long {
    padding: 0 9px;
}
.add {
    margin-left: 16px;
}
.sheet-tabs .dots {
    margin-left: auto;
}
.hscroll {
    flex: 0 1 378px;
    display: flex;
    gap: 1px;
    margin: 0 13px 0 9px;
}

/* status bar */
.status {
    flex: none;
    display: flex;
    align-items: center;
    height: 14px;
    padding: 0 4px 0 5px;
}
.views {
    display: flex;
    gap: 17px;
    margin-left: auto;
}
.zoom {
    display: flex;
    align-items: center;
    margin-left: 10px;
    color: #999;
}
.zoom input {
    appearance: none;
    width: 66px;
    height: 5px;
    margin: 0 3px;
    background: linear-gradient(transparent 2px, #bbb 2px 3px, transparent 3px);
}
.zoom input::-webkit-slider-thumb {
    appearance: none;
    width: 1px;
    height: 5px;
    background-color: #eee;
}
.zoom span {
    margin-left: 8px;
    color: #808080;
}

/* taskbar */
.taskbar {
    flex: none;
    display: flex;
    height: 21px;
    background-color: #1c1c1c;
    color: #eee;
}
.system, .apps, .tray {
    display: flex;
    align-items: center;
}
.taskbar button {
    display: grid;
    place-items: center;
    width: 23px;
    height: 21px;
}
.apps {
    margin-left: 3px;
}
.taskbar .apps button {
    width: 24px;
}
.taskbar .open {
    background: linear-gradient(#b8a8c0, #b8a8c0) no-repeat center 18px / 18px 1px;
}
.taskbar .current {
    background-color: #4a4a4a;
    background-size: 24px 1px;
}
.tray {
    gap: 8px;
    margin-left: auto;
    padding-right: 13px;
    border-right: 1px solid #444;
    margin-right: 3px;
}
.notify {
    margin-left: 3px;
}

/* message box */
.message {
    position: absolute;
    left: 424px;
    top: 234px;
    width: 162px;
    margin: 0;
    padding: 0;
    background-color: #fff;
    border: 1px solid #8a8a8a;
    box-shadow: 0 2px 10px rgba(0, 0, 0, 0.4);
    color: #222;
}
.message-title {
    display: flex;
    align-items: center;
    justify-content: space-between;
    height: 18px;
    padding: 0 7px 0 4px;
}
.message-body {
    display: flex;
    align-items: center;
    gap: 5px;
    height: 56px;
    padding-left: 13px;
}
.message-buttons {
    display: flex;
    justify-content: flex-end;
    gap: 5px;
    padding: 7px 11px 8px;
    background-color: #f0f0f0;
}
.message-buttons button {
    width: 52px;
    height: 17px;
    background-color: #f0f0f0;
    border: 1px solid #777;
    border-top-color: #fff;
    border-left-color: #fff;
}
.message-buttons .default {
    border-color: #666;
}
```
